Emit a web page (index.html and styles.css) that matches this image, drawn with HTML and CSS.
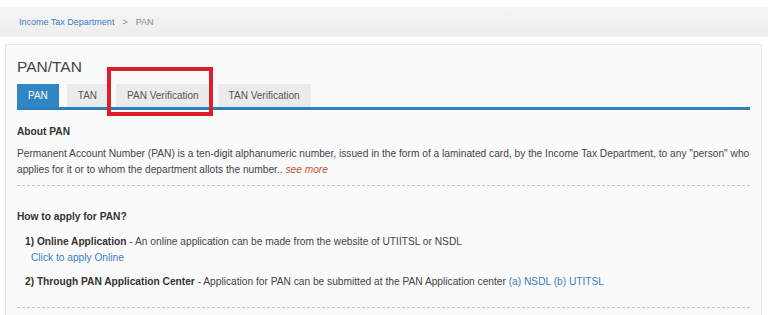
FILE: index.html
```html
<!DOCTYPE html>
<html>
<head>
<meta charset="utf-8">
<link rel="stylesheet" href="styles.css">
</head>
<body>
<div class="crumbs">
  <a class="crumb-link" href="#">Income Tax Department</a>
  <span class="crumb-sep">&gt;</span>
  <span class="crumb-current">PAN</span>
</div>
<div class="panel">
  <h1 class="title">PAN/TAN</h1>
  <div class="tabs">
    <span class="tab active">PAN</span>
    <span class="tab">TAN</span>
    <span class="tab">PAN Verification</span>
    <span class="tab">TAN Verification</span>
  </div>
  <div class="highlight"></div>
  <div class="section about">
    <h2 class="heading">About PAN</h2>
    <p class="text">Permanent Account Number (PAN) is a ten-digit alphanumeric number, issued in the form of a laminated card, by the Income Tax Department, to any "person" who applies for it or to whom the department allots the number.. <a class="more" href="#">see more</a></p>
  </div>
  <div class="section apply">
    <h2 class="heading">How to apply for PAN?</h2>
    <div class="item"><b>1) Online Application</b> - An online application can be made from the website of UTIITSL or NSDL</div>
    <div class="sublink"><a class="link" href="#">Click to apply Online</a></div>
    <div class="item second"><b>2) Through PAN Application Center</b> - Application for PAN can be submitted at the PAN Application center <a class="link" href="#">(a) NSDL</a> <a class="link" href="#">(b) UTITSL</a></div>
  </div>
</div>
</body>
</html>
```
FILE: styles.css
```css
html, body {
  margin: 0;
  padding: 0;
  background: #ffffff;
  font-family: "Liberation Sans", Arial, sans-serif;
  color: #444;
}
.crumbs {
  margin-top: 7px;
  height: 30px;
  background: linear-gradient(#f5f5f5, #eeeeee);
  display: flex;
  align-items: center;
  padding-left: 19px;
  font-size: 9px;
  gap: 8px;
}
.crumb-link {
  color: #3a7dbf;
  text-decoration: none;
}
.crumb-sep, .crumb-current {
  color: #888;
}
.panel {
  position: relative;
  margin: 7px 6px 0 5px;
  border: 1px solid #e6e6e6;
  border-bottom: none;
  background: #fafafa;
  padding: 13px 11px 0 11px;
  height: 280px;
  box-sizing: border-box;
}
.title {
  margin: 0;
  font-size: 15.5px;
  line-height: 18px;
  font-weight: normal;
  color: #444;
}
.tabs {
  margin-top: 8px;
  display: flex;
  gap: 8px;
  border-bottom: 3px solid #2f80ba;
}
.tab {
  font-size: 10px;
  line-height: 23px;
  padding: 0 11px;
  background: #ebebeb;
  color: #555;
}
.tab.active {
  background: #2f86c4;
  color: #fff;
}
.highlight {
  position: absolute;
  left: 101px;
  top: 22px;
  width: 98px;
  height: 41px;
  border: 4px solid #dc1f2a;
}
.section {
  border-bottom: 1px dashed #c4c4c4;
}
.heading {
  margin: 0;
  font-size: 10.2px;
  line-height: 16px;
  font-weight: bold;
  color: #333;
}
.about {
  padding-top: 14px;
  padding-bottom: 7px;
}
.text {
  margin: 6px 0 0 0;
  font-size: 10.2px;
  line-height: 16px;
  color: #444;
}
.more {
  color: #c0562b;
  font-style: italic;
  text-decoration: none;
}
.apply {
  padding-top: 23px;
  padding-bottom: 17px;
}
.apply .heading {
  margin-bottom: 9px;
}
.item {
  font-size: 10.2px;
  line-height: 16px;
  padding-left: 8px;
  color: #444;
}
.item.second {
  margin-top: 8px;
}
.item b {
  color: #333;
}
.sublink {
  font-size: 10.2px;
  line-height: 16px;
  padding-left: 14px;
}
.link {
  color: #3d7cc0;
  text-decoration: none;
}
```
